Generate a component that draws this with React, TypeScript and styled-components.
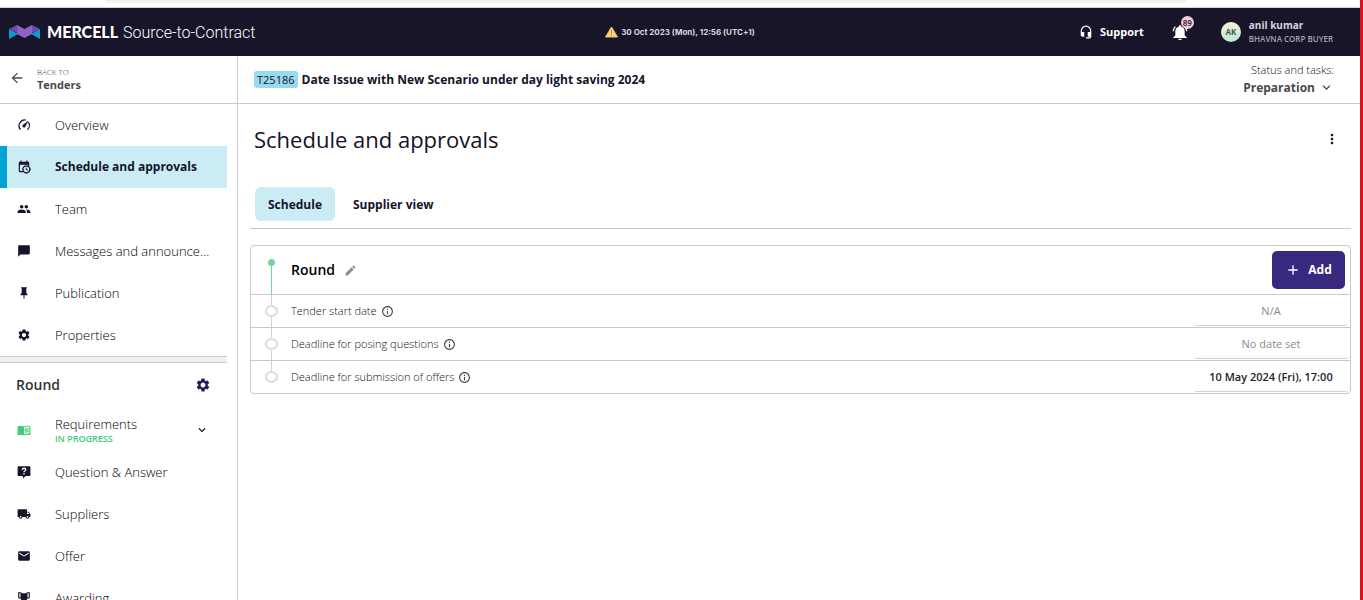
import React from "react";
import styled, { createGlobalStyle, css } from "styled-components";
import {
  MdAdd,
  MdChatBubble,
  MdEdit,
  MdGroup,
  MdHeadsetMic,
  MdKeyboardArrowDown,
  MdLocalShipping,
  MdMail,
  MdMenuBook,
  MdMoreVert,
  MdOutlineArrowBack,
  MdOutlineInfo,
  MdSettings,
} from "react-icons/md";

const color = {
  navy: "#18152a",
  ink: "#16132a",
  text: "#111",
  muted: "#8a8a8a",
  line: "#c9c9c9",
  sky: "#cbecf5",
  skyStrong: "#98daee",
  accent: "#00a3d1",
  green: "#41c97c",
  mint: "#72d6a0",
  violet: "#38297e",
  red: "#dd1021",
};

const GlobalStyle = createGlobalStyle`
  *, *::before, *::after { box-sizing: border-box; }
  body {
    margin: 0;
    background: #fff;
    color: ${color.ink};
    font-family: "Open Sans", "Noto Sans", sans-serif;
    font-size: 13px;
    line-height: 18px;
  }
  button { font: inherit; color: inherit; border: 0; padding: 0; background: none; cursor: pointer; }
  a { color: inherit; text-decoration: none; }
  h1, h2, p, ul { margin: 0; padding: 0; }
  ul { list-style: none; }
  svg { display: block; flex: none; }
`;

const Page = styled.div`
  display: flex;
  flex-direction: column;
  height: 100vh;
  overflow: hidden;
  border-right: 3px solid ${color.red};
`;

const BrowserEdge = styled.div`
  flex: none;
  height: 8px;
  padding: 0 173px 0 106px;
  border-bottom: 1px solid #d5d5d8;
`;

const AddressBar = styled.div`
  height: 3px;
  background: #f1f2f4;
  border-radius: 0 0 12px 12px;
`;

const TopBar = styled.header`
  flex: none;
  display: grid;
  grid-template-columns: 1fr auto 1fr;
  align-items: center;
  height: 48px;
  padding: 0 9px;
  background: ${color.navy};
  color: #fff;
`;

const Brand = styled.a`
  display: flex;
  align-items: center;
  gap: 6px;
  font-family: Roboto, sans-serif;
  font-weight: 300;
  font-size: 16px;
  line-height: 20px;
  white-space: nowrap;
`;

const BrandName = styled.strong`
  margin-right: 1px;
  font-family: Lato, sans-serif;
  font-weight: 900;
`;

const Clock = styled.p`
  display: flex;
  align-items: center;
  gap: 3px;
  color: #d9d8df;
  font-family: Inter, sans-serif;
  font-size: 8px;
  font-weight: 700;
`;

const Tools = styled.div`
  display: flex;
  align-items: center;
  justify-content: flex-end;
  padding-right: 18px;
`;

const Support = styled.a`
  display: flex;
  align-items: center;
  gap: 7px;
  font-size: 11px;
  font-weight: 700;
`;

const Bell = styled.button`
  position: relative;
  margin: 0 33px 0 28px;
`;

const Badge = styled.span`
  position: absolute;
  top: -8px;
  right: -6px;
  width: 13px;
  height: 13px;
  border-radius: 50%;
  background: #f8c9d6;
  color: ${color.navy};
  font-size: 8px;
  line-height: 13px;
  font-weight: 600;
`;

const Avatar = styled.span`
  width: 20px;
  height: 20px;
  margin-right: 8px;
  border-radius: 50%;
  background: linear-gradient(#f9f0d2, #b9ecd0);
  color: #3b5570;
  font-size: 8px;
  font-weight: 700;
  line-height: 20px;
  text-align: center;
`;

const User = styled.div`
  display: flex;
  flex-direction: column;
  color: #d6d5dc;
  font-size: 10px;
  line-height: 13px;
  font-weight: 700;
`;

const Company = styled.span`
  color: #a5a3b0;
  font-size: 8px;
  font-weight: 600;
`;

const Body = styled.div`
  flex: 1;
  display: flex;
  min-height: 0;
`;

const Sidebar = styled.aside`
  flex: none;
  width: 238px;
  overflow: hidden;
  border-right: 1px solid ${color.line};
`;

const BackLink = styled.a`
  display: flex;
  align-items: center;
  gap: 12px;
  height: 48px;
  padding: 0 9px 3px;
  border-bottom: 1px solid ${color.line};
  color: #4a4a4a;
  font-size: 11px;
  line-height: 13px;
  font-weight: 700;
`;

const BackHint = styled.span`
  display: block;
  color: #333;
  font-size: 8px;
  font-weight: 300;
`;

const NavLink = styled.a<{ $active?: boolean }>`
  display: flex;
  gap: 24px;
  align-items: center;
  height: 42px;
  margin-right: 10px;
  padding: 0 12px 0 10px;
  border-left: 7px solid transparent;
  color: #000;
  font-weight: 300;
  ${(p) =>
    p.$active &&
    css`
      background: ${color.sky};
      border-left-color: ${color.accent};
      color: ${color.ink};
      font-size: 12px;
      font-weight: 700;
    `}
`;

const NavIcon = styled.span<{ $done?: boolean }>`
  color: ${(p) => (p.$done ? color.green : color.ink)};
`;

const NavText = styled.span`
  flex: 1;
  min-width: 0;
  overflow: hidden;
  text-overflow: ellipsis;
  white-space: nowrap;
`;

const NavStack = styled.span`
  flex: 1;
  padding-top: 2px;
  line-height: 16px;
`;

const NavArrow = styled.span`
  margin-right: 6px;
`;

const Progress = styled.span`
  display: block;
  color: ${color.green};
  font-size: 9px;
  line-height: 14px;
  font-weight: 600;
`;

const Divider = styled.div`
  height: 7px;
  margin-right: 10px;
  background: #f1f1f1;
  border: solid ${color.line};
  border-width: 1px 0;
`;

const GroupHead = styled.div`
  display: flex;
  align-items: center;
  justify-content: space-between;
  height: 46px;
  padding: 0 26px 2px 16px;
  color: #333;
`;

const GroupTitle = styled.h2`
  font-size: 14px;
  font-weight: 600;
`;

const Main = styled.main`
  flex: 1;
  min-width: 0;
`;

const TenderBar = styled.div`
  display: flex;
  align-items: center;
  height: 48px;
  padding: 0 26px 0 16px;
  border-bottom: 1px solid ${color.line};
`;

const TenderId = styled.span`
  margin-right: 4px;
  padding: 0 3px;
  border-radius: 3px;
  background: ${color.skyStrong};
  font-size: 11px;
  line-height: 17px;
`;

const TenderName = styled.strong`
  flex: 1;
  font-size: 12px;
  font-weight: 700;
`;

const Status = styled.div`
  display: flex;
  flex-direction: column;
  align-items: flex-end;
  padding-bottom: 2px;
  color: #111;
  font-size: 11px;
  font-weight: 300;
`;

const StatusButton = styled.button`
  display: flex;
  align-items: center;
  gap: 4px;
  color: #4a4a4a;
  font-size: 12px;
  font-weight: 700;
`;

const Content = styled.div`
  padding: 19px 9px 0 12px;
`;

const TitleRow = styled.div`
  display: flex;
  align-items: center;
  justify-content: space-between;
  padding: 0 11px 0 4px;
`;

const Title = styled.h1`
  font-size: 22px;
  line-height: 32px;
  font-weight: 400;
`;

const Tabs = styled.div`
  display: flex;
  gap: 5px;
  margin: 32px 0 16px;
  padding: 0 5px 7px;
  border-bottom: 1px solid ${color.line};
`;

const Tab = styled.button<{ $active?: boolean }>`
  height: 34px;
  padding: 2px 13px 0;
  border-radius: 6px;
  background: ${(p) => (p.$active ? color.sky : "transparent")};
  font-size: 12px;
  font-weight: 700;
`;

const Card = styled.section`
  border: 1px solid ${color.line};
  border-radius: 4px;
`;

const CardHead = styled.div`
  display: flex;
  align-items: center;
  height: 48px;
  padding: 0 5px 0 14px;
`;

const CardTitle = styled.h2`
  margin: 0 9px 0 13px;
  color: #000;
  font-size: 14px;
  font-weight: 600;
`;

const AddButton = styled.button`
  display: flex;
  align-items: center;
  justify-content: center;
  gap: 7px;
  width: 73px;
  height: 38px;
  margin-left: auto;
  border-radius: 5px;
  background: ${color.violet};
  color: #fff;
  font-size: 12px;
  font-weight: 700;
`;

const Row = styled.li`
  display: flex;
  align-items: center;
  height: 33px;
  padding: 0 2px 0 14px;
  border-top: 1px solid ${color.line};
`;

const RowName = styled.span`
  display: flex;
  flex: 1;
  align-items: center;
  gap: 4px;
  margin-left: 13px;
  color: ${color.text};
  font-size: 11px;
  font-weight: 300;
`;

const Track = styled.span<{ $start?: boolean }>`
  display: flex;
  flex-direction: column;
  align-items: center;
  align-self: stretch;
  width: 13px;
  padding-top: ${(p) => (p.$start ? 13 : 0)}px;
`;

const Segment = styled.span<{ $tone?: string }>`
  flex: 1;
  width: 1px;
  background: ${(p) => p.$tone ?? "#d2d2d2"};
`;

const StartDot = styled.span`
  width: 7px;
  height: 7px;
  border-radius: 50%;
  background: ${color.mint};
`;

const StepDot = styled.span`
  width: 13px;
  height: 12px;
  border: 2px solid #dcdcdc;
  border-radius: 50%;
`;

const DateButton = styled.button<{ $set?: boolean }>`
  align-self: flex-start;
  width: 154px;
  height: 31px;
  padding-top: 2px;
  border-bottom: 1px solid #d3d3c4;
  border-radius: 3px;
  color: ${(p) => (p.$set ? "#222" : color.muted)};
  font-size: 11px;
  font-weight: ${(p) => (p.$set ? 600 : 400)};
`;

function PathIcon({ d, size = 14 }: { d: string; size?: number }) {
  return (
    <svg width={size} height={size} viewBox="0 0 24 24" fill="currentColor" aria-hidden="true">
      <path d={d} fillRule="evenodd" />
    </svg>
  );
}

const paths = {
  calendar:
    "M15 13h1.5v2.82l2.44 1.41-.75 1.3L15 16.69V13M19 8H5v11h4.67A7 7 0 0 1 19 9.67V8M5 21a2 2 0 0 1-2-2V5c0-1.1.9-2 2-2h1V1h2v2h8V1h2v2h1a2 2 0 0 1 2 2v6.1A7 7 0 1 1 11.1 21H5M16 11.15a4.85 4.85 0 1 0 0 9.7 4.85 4.85 0 0 0 0-9.7Z",
  pin: "M16 12V4h1V2H7v2h1v8l-2 2v2h5.2v6h1.6v-6H18v-2l-2-2Z",
  trophy:
    "M18 2c-.9 0-2 1-2 2H8c0-1-1.1-2-2-2H2v9c0 1 1 2 2 2h2.2c.4 2 1.7 3.7 4.8 4v2.08C8 19.54 8 22 8 22h8s0-2.46-3-2.92V17c3.1-.3 4.4-2 4.8-4H20c1 0 2-1 2-2V2h-4M6 11H4V4h2v7m14 0h-2V4h2v7Z",
  question:
    "M3 2h18a2 2 0 0 1 2 2v13a2 2 0 0 1-2 2h-6l-5 4v-4H3a2 2 0 0 1-2-2V4a2 2 0 0 1 2-2ZM8 8h2.5c0-2 3-2 3 0 0 1.8-2.8 1.9-2.8 4.5h2.5c0-1.7 3-2.2 3-4.7C16.2 3 8 3 8 8ZM10.7 14v2.3h2.5V14Z",
  bell: "M22 20v1H2v-1l3-3v-6a7 7 0 0 1 5-6.7V4a2 2 0 0 1 4 0v.3a7 7 0 0 1 5 6.7v6l3 3M15 22a3 2 0 0 1-6 0h6M19.75 3.2l-1.4 1.4A9 9 0 0 1 21 11h2a11 11 0 0 0-3.25-7.8M1 11h2a9 9 0 0 1 2.7-6.4L4.25 3.2A11 11 0 0 0 1 11Z",
};

function Gauge() {
  return (
    <svg width="14" height="14" viewBox="0 0 24 24" fill="none" stroke="currentColor" aria-hidden="true">
      <path d="M6 20A10 10 0 0 1 15 3.5M19.5 7A10 10 0 0 1 18 20" strokeWidth="2.2" />
      <path d="M18.5 5.5 13.8 15a2.2 2.2 0 0 1-3.6-2.6Z" fill="currentColor" />
    </svg>
  );
}

function Logo() {
  return (
    <svg width="32" height="16" viewBox="0 0 32 16" aria-hidden="true">
      <path d="M0 5v10l9-5z" fill="#0b9bd0" />
      <path d="M31 5v10l-9-5z" fill="#0b9bd0" />
      <path d="M0 5 8 1l2 9z" fill="#6c4bb0" />
      <path d="m31 5-8-4-2 9z" fill="#6c4bb0" />
      <path d="m8 1 7.500 4L23 1v9l-7.500 4L8 10z" fill="#8b63c6" />
    </svg>
  );
}

function Warning() {
  return (
    <svg width="13" height="12" viewBox="0 0 13 12" aria-hidden="true">
      <path d="M6.500 1 12.500 11H.5z" fill="#fbd57c" stroke="#f5c462" strokeLinejoin="round" />
      <path d="M6.500 4v3.500M6.500 8.500V10" stroke="#b98238" />
    </svg>
  );
}

const tenderNav = [
  { label: "Overview", icon: <Gauge /> },
  { label: "Schedule and approvals", icon: <PathIcon d={paths.calendar} />, active: true },
  { label: "Team", icon: <MdGroup size={14} /> },
  { label: "Messages and announcements", icon: <MdChatBubble size={14} /> },
  { label: "Publication", icon: <PathIcon d={paths.pin} /> },
  { label: "Properties", icon: <MdSettings size={14} /> },
];

const roundNav = [
  { label: "Question & Answer", icon: <PathIcon d={paths.question} /> },
  { label: "Suppliers", icon: <MdLocalShipping size={14} /> },
  { label: "Offer", icon: <MdMail size={14} /> },
  { label: "Awarding", icon: <PathIcon d={paths.trophy} /> },
];

const steps = [
  { name: "Tender start date", value: "N/A" },
  { name: "Deadline for posing questions", value: "No date set" },
  { name: "Deadline for submission of offers", value: "10 May 2024 (Fri), 17:00", set: true },
];

export default function App() {
  return (
    <Page>
      <GlobalStyle />
      <BrowserEdge>
        <AddressBar />
      </BrowserEdge>
      <TopBar>
        <Brand href="#">
          <Logo />
          <span>
            <BrandName>MERCELL</BrandName> Source-to-Contract
          </span>
        </Brand>
        <Clock>
          <Warning />
          30 Oct 2023 (Mon), 12:56 (UTC+1)
        </Clock>
        <Tools>
          <Support href="#">
            <MdHeadsetMic size={14} />
            Support
          </Support>
          <Bell aria-label="Notifications">
            <PathIcon d={paths.bell} size={16} />
            <Badge>89</Badge>
          </Bell>
          <Avatar>AK</Avatar>
          <User>
            anil kumar
            <Company>BHAVNA CORP BUYER</Company>
          </User>
        </Tools>
      </TopBar>
      <Body>
        <Sidebar>
          <BackLink href="#">
            <MdOutlineArrowBack size={16} />
            <span>
              <BackHint>BACK TO</BackHint>
              Tenders
            </span>
          </BackLink>
          <nav aria-label="Tender">
            {tenderNav.map((item) => (
              <NavLink key={item.label} href="#" $active={item.active}>
                <NavIcon>{item.icon}</NavIcon>
                <NavText>{item.label}</NavText>
              </NavLink>
            ))}
          </nav>
          <Divider />
          <GroupHead>
            <GroupTitle>Round</GroupTitle>
            <button aria-label="Round settings">
              <MdSettings size={16} color="#251b5e" />
            </button>
          </GroupHead>
          <nav aria-label="Round">
            <NavLink href="#">
              <NavIcon $done>
                <MdMenuBook size={14} />
              </NavIcon>
              <NavStack>
                Requirements
                <Progress>IN PROGRESS</Progress>
              </NavStack>
              <NavArrow>
                <MdKeyboardArrowDown size={14} />
              </NavArrow>
            </NavLink>
            {roundNav.map((item) => (
              <NavLink key={item.label} href="#">
                <NavIcon>{item.icon}</NavIcon>
                <NavText>{item.label}</NavText>
              </NavLink>
            ))}
          </nav>
        </Sidebar>
        <Main>
          <TenderBar>
            <TenderId>T25186</TenderId>
            <TenderName>Date Issue with New Scenario under day light saving 2024</TenderName>
            <Status>
              Status and tasks:
              <StatusButton>
                Preparation
                <MdKeyboardArrowDown size={15} />
              </StatusButton>
            </Status>
          </TenderBar>
          <Content>
            <TitleRow>
              <Title>Schedule and approvals</Title>
              <button aria-label="More actions">
                <MdMoreVert size={16} />
              </button>
            </TitleRow>
            <Tabs role="tablist">
              <Tab role="tab" aria-selected="true" $active>
                Schedule
              </Tab>
              <Tab role="tab" aria-selected="false">
                Supplier view
              </Tab>
            </Tabs>
            <Card>
              <CardHead>
                <Track $start>
                  <StartDot />
                  <Segment $tone={color.mint} />
                </Track>
                <CardTitle>Round</CardTitle>
                <button aria-label="Edit round name">
                  <MdEdit size={13} color="#8a8a8a" />
                </button>
                <AddButton>
                  <MdAdd size={16} />
                  Add
                </AddButton>
              </CardHead>
              <ul>
                {steps.map((step, index) => (
                  <Row key={step.name}>
                    <Track>
                      <Segment />
                      <StepDot />
                      <Segment $tone={index === steps.length - 1 ? "transparent" : undefined} />
                    </Track>
                    <RowName>
                      {step.name}
                      <MdOutlineInfo size={13} color="#444" />
                    </RowName>
                    <DateButton $set={step.set}>{step.value}</DateButton>
                  </Row>
                ))}
              </ul>
            </Card>
          </Content>
        </Main>
      </Body>
    </Page>
  );
}
